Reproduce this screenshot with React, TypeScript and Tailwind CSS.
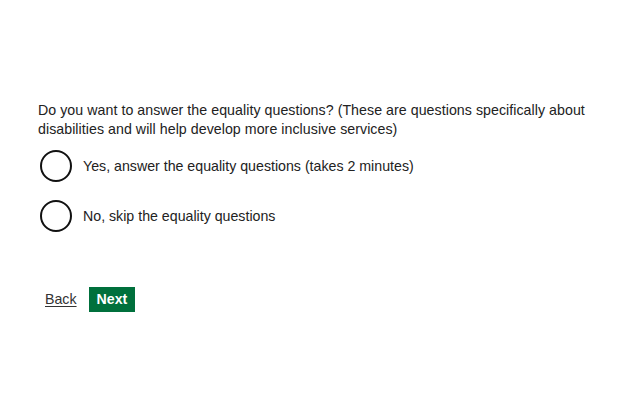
export default function App() {
  const options = [
    'Yes, answer the equality questions (takes 2 minutes)',
    'No, skip the equality questions',
  ]

  return (
    <div className="min-h-[413px] w-[620px] bg-white pl-[38px] pt-[101px] font-['Liberation_Sans',Arial,sans-serif] text-[14.2px] text-[#222222]">
      <p className="w-[560px] leading-[19px] tracking-[0.05px]">
        Do you want to answer the equality questions? (These are questions specifically about disabilities and will
        help develop more inclusive services)
      </p>

      <div className="mt-[11px] flex flex-col gap-[18px] pl-[2px]">
        {options.map((label) => (
          <label key={label} className="flex items-center gap-[11px]">
            <span className="h-[32px] w-[32px] shrink-0 rounded-full border-2 border-[#111111] bg-white" />
            <span className="leading-[19px]">{label}</span>
          </label>
        ))}
      </div>

      <div className="mt-[55px] flex items-center">
        <a href="#" className="ml-[7px] text-[#333333] underline underline-offset-2">
          Back
        </a>
        <button className="ml-[12px] h-[25px] bg-[#00703c] px-[8px] font-bold text-white">Next</button>
      </div>
    </div>
  )
}
